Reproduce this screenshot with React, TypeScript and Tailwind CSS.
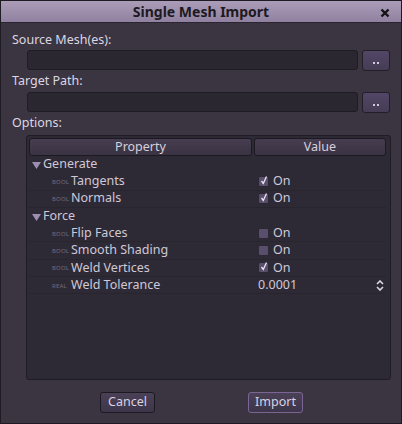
import React from "react";

type Row =
  | { kind: "group"; label: string }
  | { kind: "bool"; label: string; checked: boolean }
  | { kind: "real"; label: string; value: string };

const rows: Row[] = [
  { kind: "group", label: "Generate" },
  { kind: "bool", label: "Tangents", checked: true },
  { kind: "bool", label: "Normals", checked: true },
  { kind: "group", label: "Force" },
  { kind: "bool", label: "Flip Faces", checked: false },
  { kind: "bool", label: "Smooth Shading", checked: false },
  { kind: "bool", label: "Weld Vertices", checked: true },
  { kind: "real", label: "Weld Tolerance", value: "0.0001" },
];

function Checkbox({ checked }: { checked: boolean }) {
  return (
    <div className="w-[11px] h-[11px] shrink-0 rounded-[2px] bg-[#5a4e6d] border border-[#2c2733] relative">
      {checked && (
        <svg width="11" height="12" viewBox="0 0 11 12" className="absolute left-0 -top-[3px]">
          <path d="M2.5 7 L4.3 9.5 L7.5 2.5" stroke="#ece6f4" strokeWidth="1.3" fill="none" />
        </svg>
      )}
    </div>
  );
}

function PathRow({ top }: { top: string }) {
  return (
    <div className={`flex items-start gap-[4px] pl-[26px] pr-[11px] ${top}`}>
      <div className="flex-1 h-[20px] rounded-[3px] bg-[#2b2730] border border-[#1f1c24]" />
      <div className="w-[28px] h-[21px] rounded-[3px] border border-[#221e27] bg-gradient-to-b from-[#524766] to-[#453c55] flex items-center justify-center">
        <svg width="6" height="2" viewBox="0 0 6 2" className="mt-[4px]">
          <rect x="0" y="0" width="2" height="2" fill="#cfc8dc" />
          <rect x="4" y="0" width="2" height="2" fill="#cfc8dc" />
        </svg>
      </div>
    </div>
  );
}

export default function App() {
  return (
    <div
      className="w-[402px] h-[424px] bg-[#3b3441] border border-[#1e1b22] flex flex-col text-[#dcd7e2] text-[12.5px]"
      style={{ fontFamily: '"Noto Sans", "Open Sans", sans-serif' }}
    >
      <div className="h-[22px] shrink-0 bg-gradient-to-b from-[#ab9db8] to-[#9081a0] border-b border-[#2a2530] relative flex items-center justify-center">
        <span className="font-bold text-[14px] text-[#1c1a20]">Single Mesh Import</span>
        <svg width="10" height="10" viewBox="0 0 10 10" className="absolute right-[11px] top-[7px]">
          <path d="M1.5 1.5 L8.5 8.5 M8.5 1.5 L1.5 8.5" stroke="#141216" strokeWidth="2.4" />
        </svg>
      </div>

      <div className="pl-[11px] mt-[8px] leading-[17px]">Source Mesh(es):</div>
      <PathRow top="mt-[2px]" />
      <div className="pl-[11px] mt-[1px] leading-[17px]">Target Path:</div>
      <PathRow top="mt-[3px]" />
      <div className="pl-[11px] mt-[1px] leading-[17px]">Options:</div>

      <div className="ml-[25px] mr-[10px] mt-[4px] h-[245px] shrink-0 rounded-[3px] bg-[#2e2a35] border border-[#1f1c24] p-[2px] pr-[4px]">
        <div className="flex gap-[2px]">
          <div className="w-[223px] h-[18px] rounded-[3px] border border-[#1c1920] bg-gradient-to-b from-[#463e50] to-[#3a3343] flex items-center justify-center text-[#d6d0de]">
            Property
          </div>
          <div className="flex-1 h-[18px] rounded-[3px] border border-[#1c1920] bg-gradient-to-b from-[#463e50] to-[#3a3343] flex items-center justify-center text-[#d6d0de]">
            Value
          </div>
        </div>
        <div className="flex flex-col">
          {rows.map((r, i) =>
            r.kind === "group" ? (
              <div key={i} className="h-[17.3px] flex items-center pl-[3px] text-[#cfc8d8]">
                <svg width="9" height="7" viewBox="0 0 9 7" className="mr-[2px] mt-[1px]">
                  <path d="M0 0 H9 L4.5 7 Z" fill="#9d8fb3" />
                </svg>
                {r.label}
              </div>
            ) : (
              <div key={i} className="h-[17.3px] flex items-center border-b border-[#29252f]">
                <div className="w-[225px] shrink-0 flex items-center pl-[23px]">
                  <span className="text-[6px] tracking-[0.2px] leading-none whitespace-nowrap shrink-0 text-[#736b7e] w-[19px] mt-[1px]">
                    {r.kind === "bool" ? "BOOL" : "REAL"}
                  </span>
                  <span className="text-[#cfc8d8] whitespace-nowrap">{r.label}</span>
                </div>
                <div className="flex-1 flex items-center pl-[4px] pr-[2px]">
                  {r.kind === "bool" ? (
                    <>
                      <Checkbox checked={r.checked} />
                      <span className="ml-[4px] text-[#cfc8d8]">On</span>
                    </>
                  ) : (
                    <>
                      <span className="text-[#cfc8d8]">{r.value}</span>
                      <svg width="8" height="11" viewBox="0 0 8 11" className="ml-auto">
                        <path d="M1 4 L4 1 L7 4 M1 7 L4 10 L7 7" stroke="#dcd7e2" strokeWidth="1.6" fill="none" />
                      </svg>
                    </>
                  )}
                </div>
              </div>
            )
          )}
        </div>
      </div>

      <div className="flex mt-[12px]">
        <div className="ml-[99px] w-[55px] h-[21px] rounded-[3px] border border-[#1c1920] bg-gradient-to-b from-[#4a4157] to-[#3d3549] flex items-center justify-center text-[#d8d2e2]">
          Cancel
        </div>
        <div className="ml-[93px] w-[55px] h-[21px] rounded-[3px] border border-[#7b6595] bg-gradient-to-b from-[#4a4157] to-[#3d3549] flex items-center justify-center text-[#d8d2e2]">
          Import
        </div>
      </div>
    </div>
  );
}
